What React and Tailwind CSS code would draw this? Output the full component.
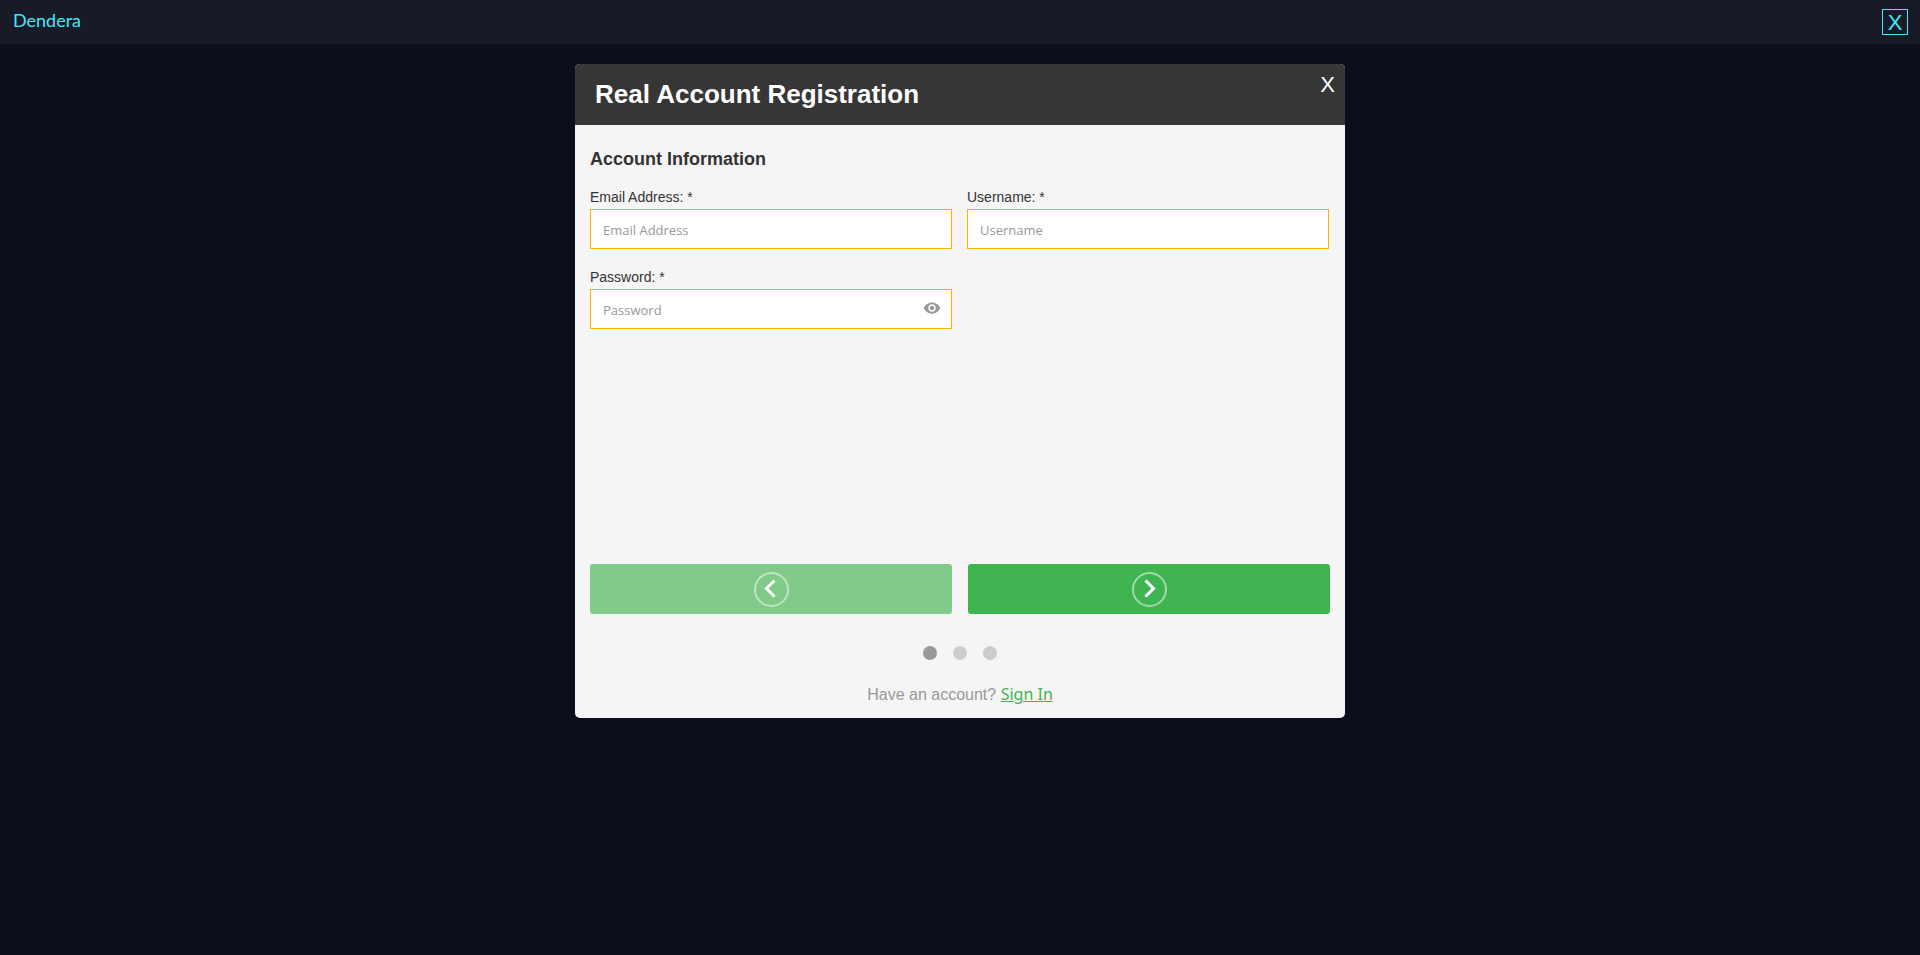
import { useState } from "react";
import { MdVisibility } from "react-icons/md";

const fields = [
  { id: "email", label: "Email Address", type: "email" },
  { id: "username", label: "Username", type: "text" },
  { id: "password", label: "Password", type: "password" },
];

function Field({ id, label, type, value, onChange }) {
  const [visible, setVisible] = useState(false);
  const isPassword = type === "password";

  return (
    <div>
      <label htmlFor={id} className="block text-sm leading-5 text-[#333333]">
        {label}: *
      </label>
      <div className="mt-0.5 flex h-10 items-center border border-[#ffb300] bg-white">
        <input
          id={id}
          name={id}
          type={isPassword && visible ? "text" : type}
          placeholder={label}
          value={value}
          onChange={onChange}
          className="h-full min-w-0 flex-1 bg-transparent px-3 pt-0.5 font-['Open_Sans',sans-serif] text-[13px] text-[#333333] outline-none placeholder:text-[#999999]"
        />
        {isPassword && (
          <button
            type="button"
            aria-label="Show password"
            onClick={() => setVisible(!visible)}
            className="mr-2.5 mb-0.5 text-[#999999]"
          >
            <MdVisibility className="size-[18px]" />
          </button>
        )}
      </div>
    </div>
  );
}

function StepButton({ label, points, className, ...props }) {
  return (
    <button
      type="button"
      aria-label={label}
      className={`flex h-[50px] items-center justify-center rounded-[3px] ${className}`}
      {...props}
    >
      <svg width="36" height="36" viewBox="0 0 36 36" fill="none" stroke="#ffffff">
        <circle cx="18.5" cy="18.5" r="16.5" strokeWidth="2" strokeOpacity="0.5" />
        <polyline points={points} strokeWidth="3" />
      </svg>
    </button>
  );
}

export default function App() {
  const [step, setStep] = useState(0);
  const [form, setForm] = useState({ email: "", username: "", password: "" });

  const handleChange = (e) => {
    setForm({ ...form, [e.target.name]: e.target.value });
  };

  return (
    <div className="min-h-screen bg-[#0c0e19] font-['Liberation_Sans',Arial,sans-serif]">
      <header className="flex h-11 items-center justify-between bg-[#181a25] pr-3 pl-[13px]">
        <span className="mb-1 font-['Lato',sans-serif] text-lg leading-6 text-[#42e8f7]">Dendera</span>
        <button
          type="button"
          aria-label="Close game"
          className="flex size-[26px] items-center justify-center border border-[#42e8f7] pt-0.5 text-[22px] leading-6 text-[#42e8f7]"
        >
          X
        </button>
      </header>

      <main className="px-4 pt-5 pb-4">
        <section className="mx-auto max-w-[770px] overflow-hidden rounded-[5px] bg-[#f5f5f5]">
          <div className="flex h-[61px] items-start justify-between bg-[#363636] pr-2.5 pb-0.5 pl-5">
            <h1 className="self-center text-[26px] leading-8 font-bold text-white">Real Account Registration</h1>
            <button type="button" aria-label="Close" className="mt-[9px] text-[22px] leading-6 text-white">
              X
            </button>
          </div>

          <form className="px-[15px] pt-5 pb-[11px]" onSubmit={(e) => e.preventDefault()}>
            {/* Fields */}
            <div className="min-h-[419px]">
              <h2 className="text-lg leading-7 font-bold text-[#333333]">Account Information</h2>
              <div className="mt-3.5 grid grid-cols-2 gap-x-[15px] gap-y-[18px] pr-px">
                {fields.map((field) => (
                  <Field key={field.id} {...field} value={form[field.id]} onChange={handleChange} />
                ))}
              </div>
            </div>

            {/* Steps */}
            <div className="grid grid-cols-2 gap-4">
              <StepButton
                label="Previous step"
                points="21.5,9.5 13.5,17.5 21.5,25.5"
                className="bg-[#40b450] disabled:bg-[#81ca8a]"
                disabled={step === 0}
                onClick={() => setStep(step - 1)}
              />
              <StepButton
                label="Next step"
                points="14.5,9.5 22.5,17.5 14.5,25.5"
                className="bg-[#40b450]"
                onClick={() => setStep(Math.min(step + 1, 2))}
              />
            </div>
            <div className="mt-8 flex justify-center gap-4">
              {[0, 1, 2].map((i) => (
                <span
                  key={i}
                  className={`size-3.5 rounded-full ${i === step ? "bg-[#999999]" : "bg-[#cccccc]"}`}
                />
              ))}
            </div>

            <p className="mt-[22px] text-center text-base leading-6 text-[#999999]">
              Have an account?{" "}
              <a href="#signin" className="font-['Noto_Sans',sans-serif] text-[#40b450] underline">
                Sign In
              </a>
            </p>
          </form>
        </section>
      </main>
    </div>
  );
}
